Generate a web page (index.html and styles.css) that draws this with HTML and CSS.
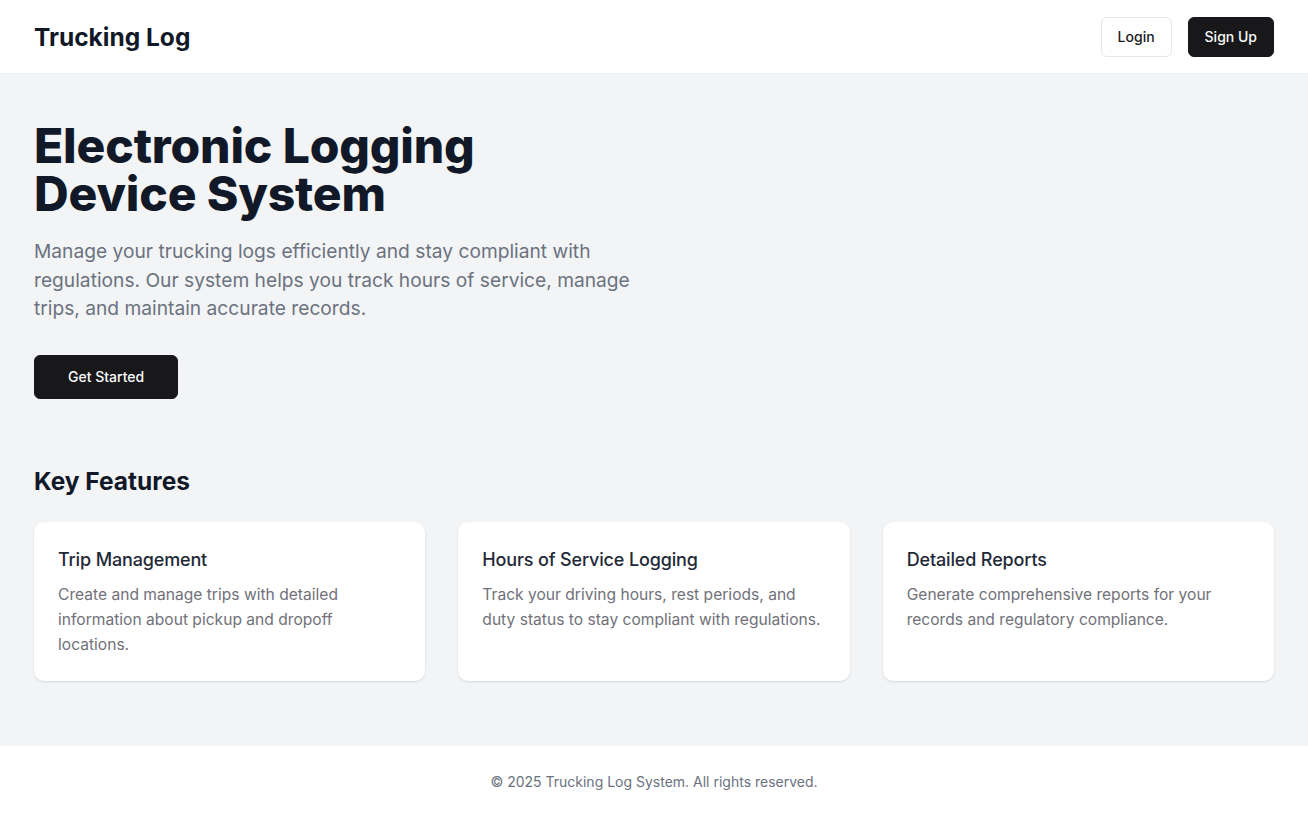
FILE: index.html
```html
<!DOCTYPE html>
<html lang="en">
<head>
<meta charset="utf-8">
<title>Trucking Log</title>
<link rel="stylesheet" href="styles.css">
</head>
<body>
<header class="topbar">
  <div class="brand">Trucking Log</div>
  <nav class="actions">
    <button class="btn btn-outline">Login</button>
    <button class="btn btn-dark">Sign Up</button>
  </nav>
</header>
<main class="main">
  <section class="hero">
    <h1 class="hero-title">Electronic Logging Device System</h1>
    <p class="hero-text">Manage your trucking logs efficiently and stay compliant with regulations. Our system helps you track hours of service, manage trips, and maintain accurate records.</p>
    <button class="btn btn-dark btn-lg">Get Started</button>
  </section>
  <section class="features">
    <h2 class="features-title">Key Features</h2>
    <div class="cards">
      <div class="card">
        <h3 class="card-title">Trip Management</h3>
        <p class="card-text">Create and manage trips with detailed information about pickup and dropoff locations.</p>
      </div>
      <div class="card">
        <h3 class="card-title">Hours of Service Logging</h3>
        <p class="card-text">Track your driving hours, rest periods, and duty status to stay compliant with regulations.</p>
      </div>
      <div class="card">
        <h3 class="card-title">Detailed Reports</h3>
        <p class="card-text">Generate comprehensive reports for your records and regulatory compliance.</p>
      </div>
    </div>
  </section>
</main>
<footer class="footer">© 2025 Trucking Log System. All rights reserved.</footer>
</body>
</html>
```
FILE: styles.css
```css
* { box-sizing: border-box; }
html, body { margin: 0; padding: 0; }
body {
  font-family: Inter, "Noto Sans", sans-serif;
  color: #111827;
  background: #ffffff;
  min-height: 816px;
  display: flex;
  flex-direction: column;
}
.topbar {
  height: 74px;
  display: flex;
  align-items: center;
  justify-content: space-between;
  padding: 0 34px;
  background: #fff;
  border-bottom: 1px solid #eceef1;
}
.brand {
  font-size: 24.5px;
  font-weight: 700;
  color: #111827;
}
.actions { display: flex; gap: 16px; }
.btn {
  font-family: Inter, sans-serif;
  font-size: 14px;
  font-weight: 500;
  height: 40px;
  border-radius: 6px;
  padding: 0 16px;
  white-space: nowrap;
  cursor: pointer;
}
.btn-outline {
  background: #fff;
  border: 1px solid #e5e7eb;
  color: #18181b;
}
.btn-dark {
  background: #18181b;
  border: 1px solid #18181b;
  color: #fafafa;
}
.btn-lg {
  height: 44px;
  padding: 0 33px;
}
.main {
  flex: 1;
  background: #f3f4f6;
  padding: 48px 34px 65px;
}
.hero-title {
  margin: 0;
  font-size: 48px;
  line-height: 48px;
  font-weight: 800;
  letter-spacing: -0.15px;
  color: #111827;
  max-width: 540px;
}
.hero-text {
  margin: 19px 0 32px;
  font-size: 19.2px;
  line-height: 28.5px;
  color: #6b7280;
  max-width: 640px;
}
.features { margin-top: 66px; }
.features-title {
  margin: 0 0 25px;
  font-size: 24.5px;
  line-height: 32px;
  font-weight: 700;
  color: #111827;
}
.cards {
  display: grid;
  grid-template-columns: repeat(3, 1fr);
  gap: 33px;
}
.card {
  background: #fff;
  border-radius: 10px;
  padding: 24px;
  box-shadow: 0 1px 3px rgba(0,0,0,0.08), 0 1px 2px rgba(0,0,0,0.04);
}
.card-title {
  margin: 0 0 8px;
  font-size: 18px;
  line-height: 28px;
  font-weight: 500;
  color: #1f2937;
  letter-spacing: -0.15px;
}
.card-text {
  margin: 0;
  font-size: 15.6px;
  line-height: 25px;
  color: #71717a;
}
.footer {
  height: 70px;
  display: flex;
  align-items: center;
  justify-content: center;
  font-size: 14px;
  color: #6b7280;
  background: #fff;
}
```
